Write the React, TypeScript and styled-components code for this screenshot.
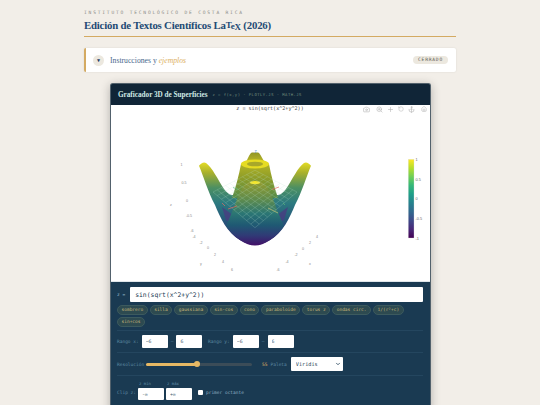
import styled, { createGlobalStyle } from 'styled-components';
import { Camera, ZoomIn, Plus, RotateCcw, Anchor, Home, ChevronDown } from 'lucide-react';

const serif = `"Liberation Serif", serif`;
const mono = `"DejaVu Sans Mono", monospace`;

const GlobalStyle = createGlobalStyle`
	html, body {
		margin: 0;
		height: 405px;
		overflow: hidden;
		background: #f2eee8;
	}
`;

const Page = styled.div`
	width: 372px;
	margin: 0 auto;
	padding-top: 10px;
`;

const Eyebrow = styled.div`
	font: 4.6px ${mono};
	letter-spacing: 1.8px;
	color: #8a8a86;
	line-height: 6px;
`;

const Title = styled.h1`
	margin: 2px 0 0;
	font: bold 10.8px/14px ${serif};
	letter-spacing: -0.2px;
	color: #234a74;
	padding-bottom: 4px;
	border-bottom: 1px solid #d4aa62;
`;

const Tex = styled.span<{ $shift: number }>`
	font-size: 9px;
	line-height: 0;
	position: relative;
	top: ${(p) => p.$shift}px;
`;

const Disclosure = styled.div`
	margin-top: 11px;
	height: 24px;
	display: flex;
	align-items: center;
	gap: 6px;
	padding: 0 8px 0 7px;
	background: #fff;
	border-left: 2px solid #d4aa62;
	border-radius: 2px;
	box-shadow: 0 0 2px rgba(60, 50, 30, 0.12);
`;

const Toggle = styled.div`
	width: 11px;
	height: 11px;
	border-radius: 50%;
	background: #ece8df;
	color: #1f4068;
	font: 5px/11px ${mono};
	text-align: center;
`;

const DisclosureLabel = styled.div`
	flex: 1;
	font: 7.7px ${serif};
	color: #48678c;
`;

const Accent = styled.em`
	color: #dcb063;
`;

const Badge = styled.div`
	padding: 0 5px;
	height: 8px;
	border-radius: 4px;
	background: #ece8df;
	color: #5c5c54;
	font: 4.6px/8px ${mono};
	letter-spacing: 0.8px;
`;

const Panel = styled.section`
	width: 319px;
	margin: 11px 0 0 26px;
	background: #1a3a52;
	border: 1px solid #52616c;
	border-bottom: 0;
	border-radius: 3px 3px 0 0;
	box-shadow: 0 2px 10px rgba(30, 30, 30, 0.3);
`;

const PanelHeader = styled.header`
	height: 21px;
	display: flex;
	align-items: center;
	gap: 5px;
	padding-left: 7px;
	background: #102537;
	border-radius: 2px 2px 0 0;
`;

const PanelTitle = styled.div`
	font: bold 7.2px ${serif};
	color: #cfe9e4;
`;

const PanelNote = styled.div`
	font: 3.9px ${mono};
	letter-spacing: 0.45px;
	color: #74907f;
`;

const PlotArea = styled.div`
	position: relative;
	height: 176px;
	background: #fff;
	border-bottom: 1px solid #dfe6ea;
`;

const PlotSvg = styled.svg`
	display: block;
	width: 100%;
	height: 100%;
`;

const ModeBar = styled.div`
	position: absolute;
	top: 0;
	right: 3px;
	height: 8px;
	display: flex;
	align-items: center;
	gap: 4px;
	color: #b4b4b4;

	svg:first-child {
		margin-right: 2px;
	}
	svg:last-child {
		margin-left: 2px;
	}
`;

const Controls = styled.div`
	padding: 5px 7px 0 6px;
`;

const FormulaRow = styled.div`
	display: flex;
	align-items: center;
	gap: 5px;
`;

const Label = styled.span<{ $tone?: string }>`
	font: 4.5px ${mono};
	white-space: nowrap;
	color: ${(p) => p.$tone ?? '#5f8aa3'};
`;

const ClipText = styled(Label)`
	margin-bottom: 5px;
`;

const FormulaInput = styled.input`
	flex: 1;
	min-width: 0;
	height: 15px;
	box-sizing: border-box;
	padding: 0 5px;
	border: 0;
	border-radius: 1px;
	background: #fff;
	color: #1a3a52;
	font: 6.4px ${mono};
`;

const Chips = styled.div`
	display: flex;
	flex-wrap: wrap;
	gap: 2px;
	padding: 3px 0;
	border-bottom: 1px solid #24465f;
`;

const Chip = styled.span`
	height: 8px;
	padding: 0 3.5px;
	border-radius: 5px;
	background: #2d4a50;
	border: 1px solid #3c5a5e;
	color: #c6b679;
	font: 4.5px/8px ${mono};
`;

const ControlRow = styled.div<{ $height: number }>`
	height: ${(p) => p.$height}px;
	display: flex;
	align-items: center;
	gap: 3px;
	border-bottom: 1px solid #24465f;
`;

const NumberInput = styled.input`
	width: 26px;
	height: 13px;
	box-sizing: border-box;
	padding: 0 4px;
	border: 0;
	border-radius: 1px;
	background: #fff;
	color: #4a6070;
	font: 4.8px ${mono};
`;

const ClipInput = styled(NumberInput)`
	height: 12px;
`;

const Track = styled.div`
	position: relative;
	width: 106px;
	height: 3px;
	margin: 0 7px 0 -1px;
	border-radius: 2px;
	background: #3b4c58;
`;

const TrackFill = styled.div`
	height: 100%;
	border-radius: 2px;
	background: #e6b864;
`;

const Thumb = styled.div`
	position: absolute;
	top: -1.5px;
	width: 6px;
	height: 6px;
	margin-left: -3px;
	border-radius: 50%;
	background: #e6b864;
`;

const SelectBox = styled.div`
	position: relative;
	width: 52px;
	height: 14px;
	margin-left: 1px;
	color: #1a3a52;

	svg {
		position: absolute;
		top: 4px;
		right: 2px;
		pointer-events: none;
	}
`;

const Select = styled.select`
	appearance: none;
	display: block;
	width: 100%;
	height: 100%;
	padding: 0 5px;
	border: 0;
	border-radius: 1px;
	background: #fff;
	color: inherit;
	font: 5.2px ${mono};
`;

const ClipRow = styled.div`
	display: flex;
	align-items: flex-end;
	gap: 2px;
	padding: 5px 0 12px;
`;

const ClipField = styled.div`
	display: flex;
	flex-direction: column;
	align-items: flex-start;
	gap: 2px;
`;

const ClipCaption = styled(Label)`
	padding-left: 1px;
	font-size: 4px;
`;

const Check = styled.span`
	width: 5px;
	height: 5px;
	margin: 0 1px 5px 4px;
	background: #fff;
	border-radius: 1px;
`;

const axisLabels = [
	[70.5, 61, '1'],
	[73, 79, '0.5'],
	[76, 97, '0'],
	[78, 112, '-0.5'],
	[60, 101, 'z'],
	[81, 127, '-6'],
	[83, 133, '-4'],
	[90, 139, '-2'],
	[97, 144, '0'],
	[104, 151, '2'],
	[112, 158, '4'],
	[90, 160, 'y'],
	[121, 166, '6'],
	[167, 166, '-6'],
	[176, 158, '-4'],
	[185, 151, '-2'],
	[192, 145, '0'],
	[199, 139, '2'],
	[206, 133, '4'],
	[199, 160, 'x'],
] as const;

const viridis = ['#fde725', '#b5de2b', '#6ece58', '#35b779', '#1f9e89', '#26828e', '#31688e', '#3e4989', '#482878', '#440154'];

// coordinates in this drawing are page pixels, so the viewBox starts at the plot's corner
const gridLines = () => {
	const corner = (u: number, v: number) => {
		const x = 255 + (v - u) * 42;
		const y = 227.7 - (u + v) * 35.7 + u * v * 14;
		return `${x.toFixed(1)} ${y.toFixed(1)}`;
	};
	const lines: string[] = [];
	for (let i = 0; i <= 10; i++) {
		lines.push(`M${corner(i / 10, 0)}L${corner(i / 10, 1)}`);
		lines.push(`M${corner(0, i / 10)}L${corner(1, i / 10)}`);
	}
	return lines.join('');
};

const SurfacePlot = () => (
	<PlotSvg viewBox="111 105 319 176" preserveAspectRatio="none">
		<defs>
			<linearGradient id="bar" x1="0" y1="0" x2="0" y2="1">
				{viridis.map((c, i) => (
					<stop key={c} offset={i / (viridis.length - 1)} stopColor={c} />
				))}
			</linearGradient>
			<linearGradient id="wings" gradientUnits="userSpaceOnUse" x1="0" y1="161" x2="0" y2="245">
				<stop offset="0" stopColor="#ece224" />
				<stop offset="0.14" stopColor="#a9b02c" />
				<stop offset="0.32" stopColor="#4c8f62" />
				<stop offset="0.5" stopColor="#2c7a80" />
				<stop offset="0.72" stopColor="#27557a" />
				<stop offset="1" stopColor="#3c1e6e" />
			</linearGradient>
			<linearGradient id="tower" gradientUnits="userSpaceOnUse" x1="0" y1="152" x2="0" y2="200">
				<stop offset="0" stopColor="#8f9428" />
				<stop offset="0.2" stopColor="#b8b626" />
				<stop offset="0.55" stopColor="#8d9c28" />
				<stop offset="1" stopColor="#4f8a4e" />
			</linearGradient>
			<linearGradient id="dome" gradientUnits="userSpaceOnUse" x1="0" y1="181" x2="0" y2="246">
				<stop offset="0" stopColor="#979d2c" />
				<stop offset="0.3" stopColor="#5b8a4f" />
				<stop offset="0.5" stopColor="#2b7674" />
				<stop offset="0.68" stopColor="#1f5973" />
				<stop offset="0.84" stopColor="#303a76" />
				<stop offset="1" stopColor="#440d68" />
			</linearGradient>
		</defs>

		<text x="270" y="110" textAnchor="middle" fontFamily="DejaVu Sans Mono, monospace" fontSize="5.1" fill="#444">
			z = sin(sqrt(x^2+y^2))
		</text>

		<path
			fill="url(#wings)"
			d="M199 165.7C201 163 204 161.5 206 163C212 167 218 180 224 189C227 193 231 196 235 195L275 195C279 196 283 193 286 189C292 180 298 167 304 163C306 161.5 309 163 311 165.7C307 175 302 192 295 205C290 217 283 233 270 240C263 244 259 245 255 245C251 245 247 244 240 240C227 233 220 217 215 205C208 192 203 175 199 165.7Z"
		/>
		<path fill="#4b3b82" opacity="0.75" d="M222 207L234 216L231 223L226 220Z" />
		<path fill="#4b3b82" opacity="0.75" d="M288 207L276 216L279 223L284 220Z" />
		<path fill="url(#tower)" d="M245 163C248 160 249 153.5 252 152.5L258 152.5C261 153.5 262 160 266 163Z" />
		<path fill="url(#tower)" d="M241 164C239 175 236 186 232 198L278 198C274 186 271 175 269 164Z" />
		<ellipse cx="255" cy="164" rx="14" ry="4.5" fill="#e6dc22" />
		<ellipse cx="255" cy="164" rx="8" ry="2.3" fill="#a8a82a" />
		<path
			fill="url(#dome)"
			d="M255 181C247 181 243 186 239 194C235 204 231 215 226 226C234 238 246 245.5 255 245.5C264 245.5 276 238 284 226C279 215 275 204 271 194C267 186 263 181 255 181Z"
		/>
		<ellipse cx="255" cy="182.6" rx="5" ry="1.6" fill="#f4e62c" />
		<path d={gridLines()} fill="none" stroke="#bfe6d2" strokeWidth="0.45" opacity="0.45" />

		<path d="M233 187.5L238 189.5M283 203L285 205" stroke="#5cb87a" strokeWidth="0.7" fill="none" />
		<path d="M272 189.5L279 187M228 209L237 206M222 203L225 206" stroke="#e06a62" strokeWidth="0.7" fill="none" />
		<path d="M268 208L278 213" stroke="#c9c77e" strokeWidth="0.7" fill="none" />
		<text x="255.5" y="153" textAnchor="middle" fontFamily="Liberation Sans, sans-serif" fontSize="4.5" fill="#6e9bd8">
			z
		</text>

		{axisLabels.map(([x, y, t]) => (
			<text key={`${x}-${y}`} x={x + 111} y={y + 105} textAnchor="middle" fontFamily="Liberation Sans, sans-serif" fontSize="3.6" fill="#888">
				{t}
			</text>
		))}

		<rect x="408.3" y="159.3" width="5.7" height="78.7" fill="url(#bar)" stroke="#ddd" strokeWidth="0.3" />
		{[
			[161, '1'],
			[180.5, '0.5'],
			[200, '0'],
			[219.5, '-0.5'],
			[239.5, '-1'],
		].map(([y, t]) => (
			<text key={t} x="415.5" y={y} fontFamily="Liberation Sans, sans-serif" fontSize="3.8" fill="#666">
				{t}
			</text>
		))}
	</PlotSvg>
);

const presets = ['sombrero', 'silla', 'gaussiana', 'sin-cos', 'cono', 'paraboloide', 'torus z', 'ondas circ.', '1/(r²+c)', 'sin+cos'];

const resolutionPercent = 48;

const App = () => {
	return (
		<>
			<GlobalStyle />
			<Page>
				<Eyebrow>INSTITUTO TECNOLÓGICO DE COSTA RICA</Eyebrow>
				<Title>
					Edición de Textos Científicos La<Tex $shift={-1}>T</Tex>
					<Tex $shift={0}>e</Tex>
					<Tex $shift={1}>X</Tex> (2026)
				</Title>

				<Disclosure>
					<Toggle>▼</Toggle>
					<DisclosureLabel>
						Instrucciones y <Accent>ejemplos</Accent>
					</DisclosureLabel>
					<Badge>CERRADO</Badge>
				</Disclosure>

				<Panel>
					<PanelHeader>
						<PanelTitle>Graficador 3D de Superficies</PanelTitle>
						<PanelNote>z = f(x,y) · PLOTLY.JS · MATH.JS</PanelNote>
					</PanelHeader>

					<PlotArea>
						<SurfacePlot />
						<ModeBar>
							<Camera size={7} />
							<ZoomIn size={7} />
							<Plus size={7} />
							<RotateCcw size={6} />
							<Anchor size={7} />
							<Home size={6} />
						</ModeBar>
					</PlotArea>

					<Controls>
						<FormulaRow>
							<Label $tone="#9fc0d4">z =</Label>
							<FormulaInput readOnly value="sin(sqrt(x^2+y^2))" />
						</FormulaRow>

						<Chips>
							{presets.map((name) => (
								<Chip key={name}>{name}</Chip>
							))}
						</Chips>

						<ControlRow $height={21}>
							<Label>Rango x:</Label>
							<NumberInput readOnly value="−6" />
							<Label>–</Label>
							<NumberInput readOnly value="6" />
							<Label>&nbsp;Rango y:</Label>
							<NumberInput readOnly value="−6" />
							<Label>–</Label>
							<NumberInput readOnly value="6" />
						</ControlRow>

						<ControlRow $height={22}>
							<Label>Resolución</Label>
							<Track>
								<TrackFill style={{ width: `${resolutionPercent}%` }} />
								<Thumb style={{ left: `${resolutionPercent}%` }} />
							</Track>
							<Label $tone="#e6b864">55</Label>
							<Label>Paleta</Label>
							<SelectBox>
								<Select defaultValue="Viridis">
									<option>Viridis</option>
								</Select>
								<ChevronDown size={6} strokeWidth={3} />
							</SelectBox>
						</ControlRow>

						<ClipRow>
							<ClipText>Clip z:</ClipText>
							<ClipField>
								<ClipCaption>z mín</ClipCaption>
								<ClipInput readOnly value="-∞" />
							</ClipField>
							<ClipField>
								<ClipCaption>z máx</ClipCaption>
								<ClipInput readOnly value="+∞" />
							</ClipField>
							<Check />
							<ClipText $tone="#8fb0c4">primer octante</ClipText>
						</ClipRow>
					</Controls>
				</Panel>
			</Page>
		</>
	);
};

export default App;
